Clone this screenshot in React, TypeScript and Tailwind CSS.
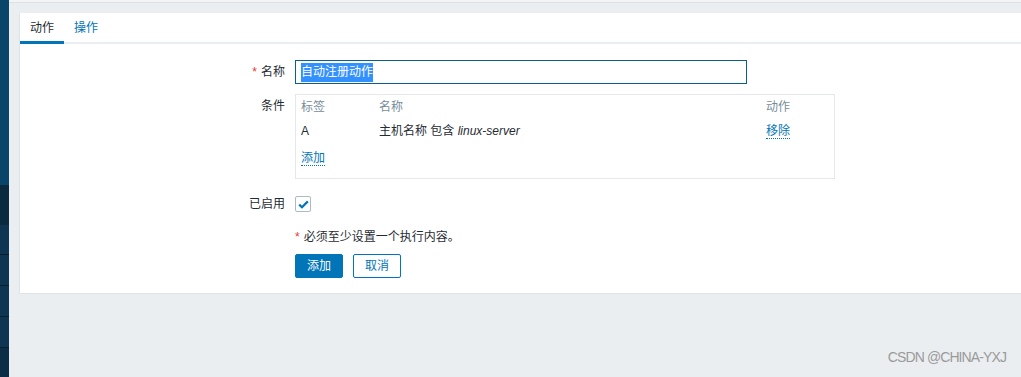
import type { JSX } from "react";

const font = { fontFamily: '"Liberation Sans", Arial, "Noto Sans CJK SC", sans-serif' };

// Left dark navigation strip, only a sliver visible
const Sidebar = (): JSX.Element => {
  return (
    <div className="flex flex-col w-[9px] shrink-0 bg-[#0e3552]">
      <div className="h-[185px] bg-[#0a4468]" />
      <div className="h-[40px] bg-[#0a2a3f]" />
      <div className="h-[30px] border-b border-[#061f2e]" />
      <div className="h-[31px] border-b border-[#061f2e]" />
      <div className="h-[31px] border-b border-[#061f2e]" />
      <div className="h-[31px] border-b border-[#061f2e]" />
      <div className="flex-1 bg-[#0b2d45]" />
    </div>
  );
};

const Tabs = (): JSX.Element => {
  return (
    <div className="flex h-[31px] border-b-[2px] border-[#ebeef0]">
      <div className="relative flex items-center px-[10px] text-[12px] text-[#1f2c33]">
        动作
        <span className="absolute left-0 right-0 -bottom-[2px] h-[3px] bg-[#0275b8]" />
      </div>
      <div className="flex items-center px-[10px] text-[12px] text-[#0275b8]">操作</div>
    </div>
  );
};

const Label = ({ children, required }: { children: string; required?: boolean }): JSX.Element => (
  <div className="text-right text-[12px] text-[#1f2c33] leading-[24px]">
    {required && <span className="text-[#e33734] mr-[4px]">*</span>}
    {children}
  </div>
);

const ConditionsTable = (): JSX.Element => {
  return (
    <div className="w-[540px] h-[85px] border border-[#e5e8eb] px-[5px] text-[12px]">
      <div className="grid grid-cols-[78px_387px_1fr] h-[24px] items-center text-[#768d99]">
        <span>标签</span>
        <span>名称</span>
        <span>动作</span>
      </div>
      <div className="grid grid-cols-[78px_387px_1fr] h-[23px] items-center text-[#1f2c33]">
        <span>A</span>
        <span>
          主机名称 包含 <i>linux-server</i>
        </span>
        <span>
          <span className="text-[#0275b8] border-b border-dotted border-[#0275b8]">移除</span>
        </span>
      </div>
      <div className="mt-[5px] h-[23px] flex items-center">
        <span className="text-[#0275b8] border-b border-dotted border-[#0275b8] leading-[14px]">添加</span>
      </div>
    </div>
  );
};

const ActionForm = (): JSX.Element => {
  return (
    <div className="grid grid-cols-[265px_1fr] gap-x-[10px] pt-[16px] pb-[15px]">
      <Label required>名称</Label>
      <div className="w-[452px] h-[24px] border border-[#0a5f8f] flex items-center px-[5px] text-[12px]">
        <span className="bg-[#3390ff] text-white leading-[19px]">自动注册动作</span>
      </div>

      <div className="mt-[10px]">
        <Label>条件</Label>
      </div>
      <div className="mt-[10px]">
        <ConditionsTable />
      </div>

      <div className="mt-[13px]">
        <Label>已启用</Label>
      </div>
      <div className="mt-[13px] h-[24px] flex items-center">
        <div className="w-[16px] h-[16px] border border-[#acbbc2] rounded-[2px] bg-white flex items-center justify-center">
          <svg width="11" height="9" viewBox="0 0 11 9">
            <path d="M1.2 4.6 L4 7.2 L9.8 1.4" fill="none" stroke="#0275b8" strokeWidth="2.2" />
          </svg>
        </div>
      </div>

      <div />
      <div className="mt-[13px] text-[12px] text-[#1f2c33] leading-[16px]">
        <span className="text-[#e33734] mr-[4px]">*</span>必须至少设置一个执行内容。
      </div>

      <div />
      <div className="mt-[9px] flex gap-[10px]">
        <button className="w-[48px] h-[24px] rounded-[2px] bg-[#0275b8] border border-[#0275b8] text-white text-[12px]">
          添加
        </button>
        <button className="w-[48px] h-[24px] rounded-[2px] bg-white border border-[#0275b8] text-[#0275b8] text-[12px]">
          取消
        </button>
      </div>
    </div>
  );
};

export default function App(): JSX.Element {
  return (
    <div className="relative flex w-[1021px] h-[377px] overflow-hidden bg-[#ebeef0]" style={font}>
      <Sidebar />
      <div className="flex-1 flex flex-col">
        <div className="h-[3px] bg-[#f2f4f5] border-b border-[#dde1e4]" />
        <div className="mt-[10px] ml-[10px] bg-white border-l border-b border-[#dfe4e7]">
          <Tabs />
          <ActionForm />
        </div>
      </div>
      {/* CSDN watermark over the page */}
      <div className="absolute right-[15px] bottom-[9px] text-[14px] text-[#9a9a9a] tracking-[-0.9px]">
        CSDN @CHINA-YXJ
      </div>
    </div>
  );
}
